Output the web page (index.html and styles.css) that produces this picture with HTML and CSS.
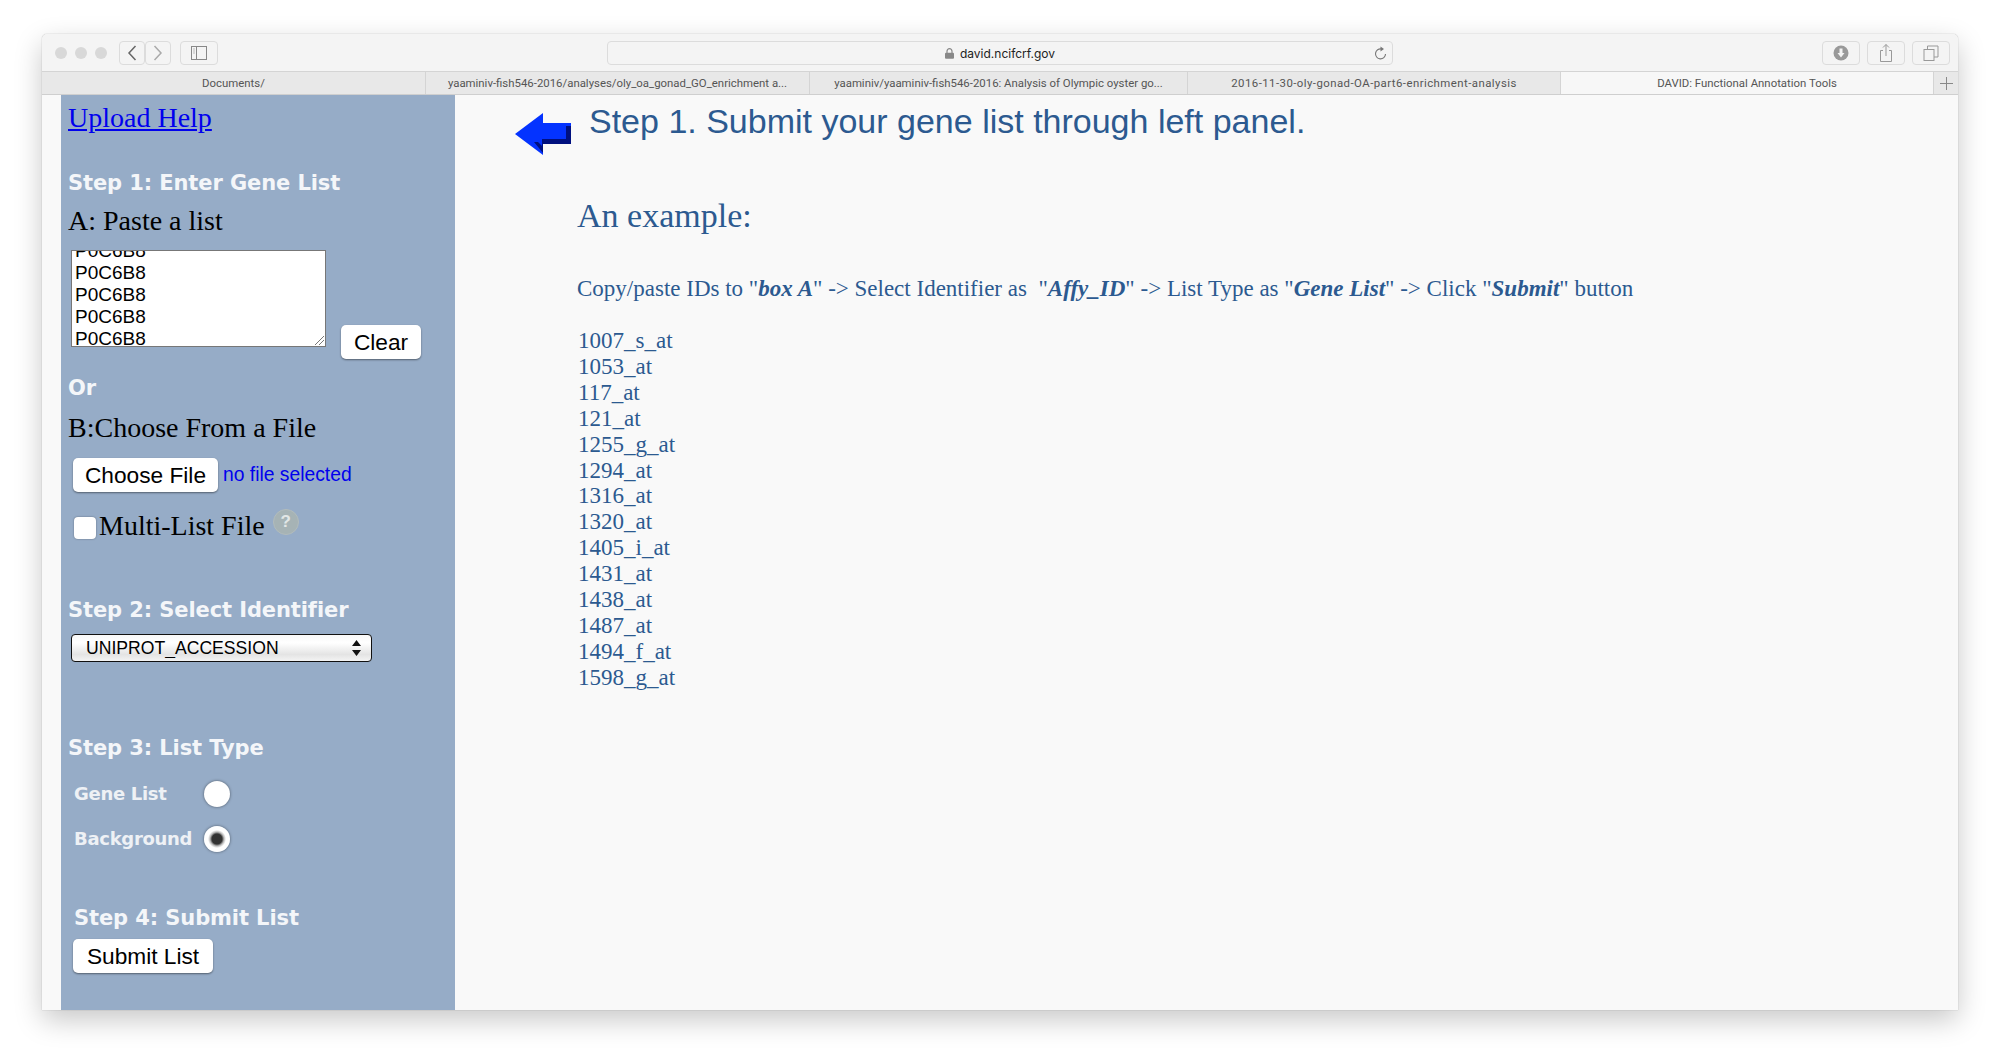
FILE: index.html
```html
<!DOCTYPE html>
<html>
<head>
    <title>DAVID: Functional Annotation Tools</title>
    <link rel="stylesheet" href="styles.css">
</head>
<body>
    <div class="window">
        <!-- browser toolbar -->
        <div class="toolbar">
            <div class="lights"><i></i><i></i><i></i></div>
            <div class="nav-group">
                <span class="tool-btn nav-btn"><svg width="12" height="18" viewBox="0 0 12 18"><path d="M9.500 2 L3 9 L9.500 16" fill="none" stroke="#666" stroke-width="1.500"/></svg></span>
                <span class="tool-btn nav-btn"><svg width="12" height="18" viewBox="0 0 12 18"><path d="M2.500 2 L9 9 L2.500 16" fill="none" stroke="#aaa" stroke-width="1.500"/></svg></span>
            </div>
            <span class="tool-btn side-btn"><svg width="16" height="14" viewBox="0 0 16 14"><rect x="0.500" y="0.500" width="15" height="13" fill="none" stroke="#888"/><path d="M5.500 1 V13" stroke="#888"/><path d="M2 3 H4 M2 5 H4 M2 7 H4" stroke="#bbb"/></svg></span>
            <div class="address">
                <svg class="lock" width="9" height="11" viewBox="0 0 9 11"><path d="M2 5 V3.200 A2.500 2.500 0 0 1 7 3.200 V5" fill="none" stroke="#888" stroke-width="1.200"/><rect y="4.800" width="9" height="6" rx="1" fill="#888"/></svg>
                <span>david.ncifcrf.gov</span>
                <svg class="reload" width="13" height="15" viewBox="0 0 13 15"><path d="M7.500 3 A5 5 0 1 0 11.500 8" fill="none" stroke="#777" stroke-width="1.100"/><path d="M6.500 0.500 L10 3 L6.500 5.500 Z" fill="#777"/></svg>
            </div>
            <div class="right-tools">
                <span class="tool-btn"><svg width="16" height="16" viewBox="0 0 16 16"><circle cx="8" cy="8" r="7.500" fill="#999"/><path d="M6.500 3.500 H9.500 V8 H11.500 L8 12.500 L4.500 8 H6.500 Z" fill="#f3f3f3"/></svg></span>
                <span class="tool-btn"><svg width="14" height="20" viewBox="0 0 14 20"><path d="M4 7.500 H1.500 V18.500 H12.500 V7.500 H10" fill="none" stroke="#999"/><path d="M7 13 V1.500 M4 4.500 L7 1.500 L10 4.500" fill="none" stroke="#999"/></svg></span>
                <span class="tool-btn"><svg width="16" height="16" viewBox="0 0 16 16"><rect x="1" y="4.500" width="10" height="11" fill="none" stroke="#999"/><path d="M4.500 4.500 V1 H15 V12 H11" fill="none" stroke="#999"/></svg></span>
            </div>
        </div>

        <!-- tabs -->
        <div class="tabs">
            <div class="tab">Documents/</div>
            <div class="tab">yaaminiv-fish546-2016/analyses/oly_oa_gonad_GO_enrichment a...</div>
            <div class="tab">yaaminiv/yaaminiv-fish546-2016: Analysis of Olympic oyster go...</div>
            <div class="tab spaced">2016-11-30-oly-gonad-OA-part6-enrichment-analysis</div>
            <div class="tab active">DAVID: Functional Annotation Tools</div>
            <div class="tab add"><svg width="13" height="13" viewBox="0 0 13 13"><path d="M6.500 0 V13 M0 6.500 H13" stroke="#888"/></svg></div>
        </div>

        <div class="page">
            <!-- left panel -->
            <form class="panel">
                <a class="upload-help" href="#">Upload Help</a>

                <h3 class="step step-one">Step 1: Enter Gene List</h3>
                <div class="sub paste-label">A: Paste a list</div>
                <div class="paste-row">
                    <div class="gene-box">
                        <div class="gene-lines">P0C6B8<br>P0C6B8<br>P0C6B8<br>P0C6B8<br>P0C6B8</div>
                        <svg class="grip" width="9" height="9" viewBox="0 0 9 9"><path d="M0 9 L9 0 M4 9 L9 4" stroke="#777"/></svg>
                    </div>
                    <button type="button" class="btn clear-btn">Clear</button>
                </div>

                <h3 class="step or">Or</h3>
                <div class="sub file-label">B:Choose From a File</div>
                <div class="file-row">
                    <button type="button" class="btn file-btn">Choose File</button>
                    <span class="no-file">no file selected</span>
                </div>
                <div class="multi-row">
                    <input type="checkbox" class="check">
                    <span class="multi-text">Multi-List File</span>
                    <span class="help-dot">?</span>
                </div>

                <h3 class="step step-two">Step 2: Select Identifier</h3>
                <div class="select-box">
                    <select class="identifier"><option>UNIPROT_ACCESSION</option></select>
                    <svg class="updown" width="9" height="16" viewBox="0 0 9 16"><path d="M4.500 0 L9 6 H0 Z M4.500 16 L9 10 H0 Z" fill="#111"/></svg>
                </div>

                <h3 class="step step-three">Step 3: List Type</h3>
                <label class="type-row first-type"><span class="type-name">Gene List</span><input type="radio" name="listtype" class="radio"></label>
                <label class="type-row"><span class="type-name">Background</span><input type="radio" name="listtype" class="radio" checked></label>

                <h3 class="step step-four">Step 4: Submit List</h3>
                <button type="button" class="btn submit-btn">Submit List</button>
            </form>

            <!-- main content -->
            <div class="main">
                <div class="main-head">
                    <svg class="arrow" width="56" height="42" viewBox="0 0 56 42">
                        <path d="M0 21 L28 0 V10 H56 V31 H28 V42 Z" fill="#0433ff"/>
                        <path d="M56 13 H51 V26 H27 V33 L23 29 L19 29 L28 40 V31 H56 Z" fill="#00107f"/>
                    </svg>
                    <h1 class="title">Step 1. Submit your gene list through left panel.</h1>
                </div>
                <div class="example">
                    <h2 class="example-title">An example:</h2>
                    <p class="howto">Copy/paste IDs to "<b><i>box A</i></b>" -&gt; Select Identifier as &nbsp;"<b><i>Affy_ID</i></b>" -&gt; List Type as "<b><i>Gene List</i></b>" -&gt; Click "<b><i>Submit</i></b>" button</p>
                    <div class="ids">
                        1007_s_at<br>1053_at<br>117_at<br>121_at<br>1255_g_at<br>1294_at<br>1316_at<br>1320_at<br>1405_i_at<br>1431_at<br>1438_at<br>1487_at<br>1494_f_at<br>1598_g_at
                    </div>
                </div>
            </div>
        </div>
    </div>
</body>
</html>
```

FILE: styles.css
```css
html, body {
    height: 100%;
}
body {
    margin: 0;
    padding: 34px 42px 50px 42px;
    box-sizing: border-box;
    background-color: #fff;
    overflow: hidden;
}
.window {
    height: 100%;
    display: flex;
    flex-direction: column;
    background-color: #f9f9f9;
    border-radius: 5px 5px 0 0;
    overflow: hidden;
    box-shadow: 0 0 1px rgba(0, 0, 0, 0.45), 0 10px 28px rgba(0, 0, 0, 0.22);
}

/* toolbar */
.toolbar {
    height: 38px;
    box-sizing: border-box;
    display: flex;
    align-items: center;
    padding: 0 8px 0 13px;
    background-color: #f4f4f4;
    border-bottom: 1px solid #d4d4d4;
}
.lights {
    display: flex;
    gap: 8px;
    margin-right: 12px;
}
.lights i {
    width: 12px;
    height: 12px;
    border-radius: 50%;
    background-color: #d8d8d8;
}
.tool-btn {
    height: 24px;
    width: 38px;
    box-sizing: border-box;
    display: flex;
    align-items: center;
    justify-content: center;
    border: 1px solid #dcdcdc;
    border-radius: 4px;
}
.nav-group {
    display: flex;
    margin-right: 9px;
}
.nav-btn {
    width: 26px;
}
.address {
    width: 786px;
    height: 24px;
    box-sizing: border-box;
    padding-top: 1px;
    margin-left: 389px;
    position: relative;
    display: flex;
    align-items: center;
    justify-content: center;
    gap: 6px;
    border: 1px solid #dcdcdc;
    border-radius: 4px;
    font: 12px Inter, sans-serif;
    color: #222;
}
.reload {
    position: absolute;
    right: 5px;
    top: 4px;
}
.right-tools {
    display: flex;
    gap: 7px;
    margin-left: auto;
}

/* tabs */
.tabs {
    height: 23px;
    box-sizing: border-box;
    display: grid;
    grid-template-columns: 384px 384px 378px 373px 1fr 24px;
    background-color: #e8e8e8;
    border-bottom: 1px solid #cfcfcf;
    font: 11.400px Roboto, sans-serif;
    color: #555;
}
.tab {
    display: flex;
    align-items: center;
    justify-content: center;
    border-right: 1px solid #d4d4d4;
    white-space: nowrap;
}
.tab.spaced {
    letter-spacing: 0.45px;
}
.tab.active {
    background-color: #f7f7f7;
}
.tab.add {
    border-right: none;
}

/* left panel */
.page {
    flex: 1;
    display: flex;
    min-height: 0;
}
.panel {
    width: 394px;
    margin-left: 19px;
    box-sizing: border-box;
    padding: 5px 0 0 7px;
    background-color: #96acc7;
    font-family: "Liberation Serif", serif;
    color: #000;
}
.upload-help {
    display: block;
    font-size: 28px;
    line-height: 36px;
    color: #0000ee;
}
.step {
    margin: 0;
    font: bold 21px/28px "DejaVu Sans", sans-serif;
    letter-spacing: -0.1px;
    color: #f4f6f9;
}
.step-one {
    margin-top: 33px;
}
.sub {
    font-size: 28px;
    line-height: 34px;
}
.paste-label {
    margin-top: 7px;
}
.paste-row {
    display: flex;
    align-items: flex-end;
    margin: 12px 0 0 3px;
}
.gene-box {
    width: 255px;
    height: 97px;
    box-sizing: border-box;
    position: relative;
    overflow: hidden;
    padding: 0 3px;
    background-color: #fff;
    border: 1px solid #777;
}
.gene-lines {
    margin-top: -11px;
    font: 19px/22px "Liberation Sans", sans-serif;
}
.grip {
    position: absolute;
    right: 1px;
    bottom: 1px;
}
.btn {
    height: 34px;
    padding: 0 12px;
    background-color: #fff;
    border: none;
    border-radius: 5px;
    box-shadow: 0 1px 2px rgba(0, 0, 0, 0.45);
    font: 22.700px "Liberation Sans", sans-serif;
    color: #000;
}
.clear-btn {
    width: 80px;
    margin: 0 0 -12px 15px;
    padding: 0;
}
.or {
    margin-top: 27px;
}
.file-label {
    margin-top: 9px;
}
.file-row {
    display: flex;
    align-items: center;
    gap: 5px;
    margin: 13px 0 0 5px;
}
.file-btn {
    width: 145px;
    padding: 0;
}
.no-file {
    font: 19.300px "Liberation Sans", sans-serif;
    color: #0000ee;
}
.multi-row {
    display: flex;
    align-items: center;
    margin: 14px 0 0 6px;
    height: 40px;
}
.check {
    appearance: none;
    width: 22px;
    height: 22px;
    margin: 4px 3px 0 0;
    background-color: #fff;
    border-radius: 4px;
    box-shadow: 0 0 2px rgba(0, 0, 0, 0.4);
}
.multi-text {
    font-size: 28px;
}
.help-dot {
    width: 26px;
    height: 26px;
    margin: -8px 0 0 8px;
    border-radius: 50%;
    background-color: #a6b3b5;
    border: 1px solid #b2bcbc;
    box-sizing: border-box;
    text-align: center;
    font: bold 17px/24px "Liberation Sans", sans-serif;
    color: #e2e7e6;
}
.step-two {
    margin-top: 50px;
}
.select-box {
    width: 301px;
    height: 28px;
    position: relative;
    margin: 10px 0 0 3px;
}
.identifier {
    appearance: none;
    width: 100%;
    height: 100%;
    padding: 0 0 0 14px;
    background: linear-gradient(#f8f8f8, #fff 30%, #e4e4e4 75%, #f4f4f4);
    border: 1px solid #111;
    border-radius: 4px;
    font: 17.600px "Liberation Sans", sans-serif;
    color: #000;
}
.updown {
    position: absolute;
    right: 11px;
    top: 6px;
}
.step-three {
    margin-top: 72px;
}
.type-row {
    display: flex;
    align-items: center;
    height: 33px;
    padding-left: 6px;
    margin-top: 12px;
    font: bold 18px "DejaVu Sans", sans-serif;
    letter-spacing: -0.3px;
    color: #eef1f5;
}
.first-type {
    margin-top: 15px;
}
.type-name {
    width: 130px;
}
.radio {
    appearance: none;
    width: 26px;
    height: 26px;
    margin: 0;
    border-radius: 50%;
    background-color: #fff;
    box-shadow: 0 0 3px rgba(0, 0, 0, 0.5);
}
.radio:checked {
    background: radial-gradient(circle, #333 0, #333 5px, #bbb 7px, #fff 9px);
}
.step-four {
    margin: 49px 0 0 6px;
}
.submit-btn {
    display: block;
    width: 140px;
    margin: 7px 0 0 5px;
    padding: 0;
}

/* main content */
.main {
    flex: 1;
    color: #2c5a90;
    font-family: "Liberation Serif", serif;
}
.main-head {
    display: flex;
    align-items: flex-start;
    margin: 0 0 0 60px;
}
.arrow {
    margin-top: 18px;
    flex: none;
}
.title {
    margin: 3px 0 0 18px;
    font: normal 34px/47px "Liberation Sans", sans-serif;
}
.example {
    margin-left: 122px;
}
.example-title {
    margin: 40px 0 0 0;
    font-size: 34px;
    font-weight: normal;
    line-height: 42px;
}
.howto {
    margin: 38px 0 0 0;
    font-size: 23px;
    line-height: 28px;
}
.ids {
    margin: 25px 0 0 1px;
    font-size: 23px;
    line-height: 25.900px;
}
```
